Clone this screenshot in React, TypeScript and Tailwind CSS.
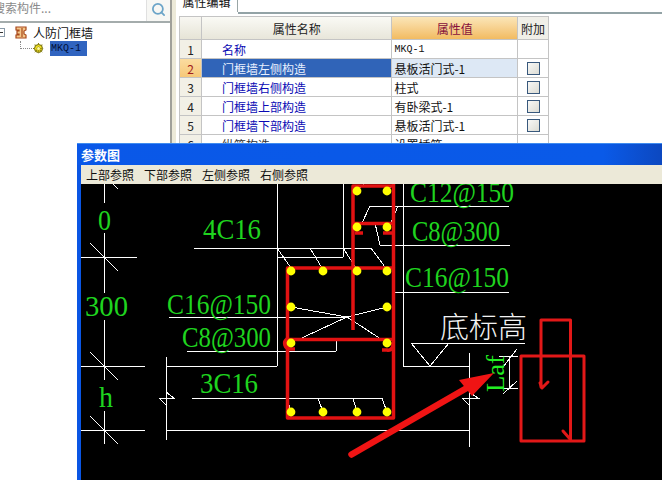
import React from "react";
import { Search } from "lucide-react";

const CJK = "font-['Noto_Sans_CJK_SC','Liberation_Sans',sans-serif]";
const MONO = "font-['Liberation_Mono','Noto_Sans_CJK_SC',monospace]";

type Row = { n: number; name: string; value: string; check: boolean; dark?: boolean };
const rows: Row[] = [
  { n: 1, name: "名称", value: "MKQ-1", check: false },
  { n: 2, name: "门框墙左侧构造", value: "悬板活门式-1", check: true },
  { n: 3, name: "门框墙右侧构造", value: "柱式", check: true },
  { n: 4, name: "门框墙上部构造", value: "有卧梁式-1", check: true },
  { n: 5, name: "门框墙下部构造", value: "悬板活门式-1", check: true },
  { n: 6, name: "纵筋构造", value: "设置插筋", check: false, dark: true },
];

const white: number[][] = [
  [104, 184, 104, 203], [104, 233, 104, 293], [104, 320, 104, 380], [104, 411, 104, 444],
  [81, 257, 137, 257], [105, 176, 118, 189], [90, 243, 118, 271],
  [81, 366, 145, 366], [90, 352, 118, 380], [81, 430, 145, 430], [90, 416, 118, 444],
  [166, 357, 166, 440], [166, 366, 277, 366], [166, 430, 469, 430],
  [277, 184, 277, 366], [343, 184, 343, 257], [277, 257, 343, 257],
  [194, 248, 371, 248], [277, 248, 291, 268], [310, 248, 322, 268], [343, 248, 356, 268], [371, 248, 385, 267],
  [169, 317, 347, 317], [291, 307, 347, 317], [347, 317, 387, 343], [387, 307, 347, 317], [347, 317, 291, 343],
  [187, 351, 336, 351], [336, 351, 336, 339],
  [192, 398, 382, 398], [287, 398, 291, 412], [318, 398, 323, 412], [353, 398, 357, 412], [382, 398, 387, 412],
  [364, 184, 357, 190], [394, 184, 387, 190],
  [370, 206, 509, 206], [370, 206, 362, 223], [398, 206, 391, 223],
  [380, 245, 510, 245], [375, 223, 380, 245],
  [403, 184, 403, 366], [403, 366, 469, 366], [393, 292, 509, 292],
  [411, 343, 525, 343], [411, 343, 430, 366], [430, 366, 449, 343],
  [469, 353, 469, 447],
  [499, 356, 518, 356], [499, 388, 518, 388], [509, 356, 509, 388], [503, 367, 517, 349], [503, 394, 517, 381],
];

const dots: number[][] = [
  [357, 191], [387, 191], [357, 227], [387, 227],
  [291, 271], [323, 271], [357, 271], [387, 271],
  [291, 307], [387, 307], [291, 343], [387, 343],
  [291, 412], [323, 412], [357, 412], [387, 412],
];

const labels: { t: string; x: number; y: number; w: number; s: number }[] = [
  { t: "0", x: 98, y: 230, w: 13, s: 30 },
  { t: "300", x: 85, y: 316, w: 43, s: 30 },
  { t: "h", x: 99, y: 407, w: 14, s: 29 },
  { t: "4C16", x: 203, y: 239, w: 58, s: 29 },
  { t: "C16@150", x: 167, y: 314, w: 104, s: 29 },
  { t: "C8@300", x: 182, y: 347, w: 89, s: 29 },
  { t: "3C16", x: 200, y: 393, w: 58, s: 29 },
  { t: "C12@150", x: 410, y: 202, w: 104, s: 29 },
  { t: "C8@300", x: 412, y: 241, w: 88, s: 29 },
  { t: "C16@150", x: 405, y: 287, w: 104, s: 29 },
];

function Diagram() {
  return (
    <svg viewBox="81 184 581 296" className="block h-full w-full bg-black">
      <g stroke="#ffffff" strokeWidth="1" fill="none" shapeRendering="crispEdges">
        {white.map((l, i) => (
          <line key={i} x1={l[0]} y1={l[1]} x2={l[2]} y2={l[3]} />
        ))}
        <polyline points="166,392 174,398 159,398 166,405" />
        <polyline points="469,392 478,398 462,398 469,405" />
      </g>
      <g stroke="#e21212" strokeWidth="3.5" fill="none" strokeLinejoin="round" strokeLinecap="butt">
        <rect x="287.5" y="268" width="106" height="150" />
        <polyline points="393.5,186 353,186 353,330" />
        <line x1="393.5" y1="184" x2="393.5" y2="268" />
        <line x1="353" y1="223.5" x2="393" y2="223.5" />
        <line x1="355" y1="233" x2="363" y2="233" />
        <line x1="383" y1="233" x2="392" y2="233" />
        <line x1="287" y1="339.5" x2="393" y2="339.5" />
        <path d="M287 339 a5.5 5.5 0 0 0 3 10 h5" />
        <path d="M382 350 h5 a5 5 0 0 0 5 -8" />
      </g>
      {dots.map((d, i) => (
        <circle key={i} cx={d[0]} cy={d[1]} r="4.4" fill="#ffff00" />
      ))}
      {labels.map((l, i) => (
        <text key={i} x={l.x} y={l.y} fontFamily="'Liberation Serif', serif" fontSize={l.s} fill="#1fd41f" textLength={l.w} lengthAdjust="spacingAndGlyphs">
          {l.t}
        </text>
      ))}
      <text x="440" y="338" fontFamily="'Noto Sans CJK SC', sans-serif" fontWeight="300" fontSize="29" fill="#f2f2f2" textLength="87">
        底标高
      </text>
      <text transform="translate(503.5 392) rotate(-90)" fontFamily="'Liberation Serif', serif" fontSize="25" fill="#22ee22" textLength="37" lengthAdjust="spacingAndGlyphs">
        Laf
      </text>
      <g stroke="#e21818" strokeWidth="3" fill="none" strokeLinejoin="round" strokeLinecap="round">
        <rect x="521" y="356" width="63" height="85" />
        <polyline points="541,387 541,320 570.5,320 570.5,440" />
        <polyline points="540,383 542,388 548,382" />
        <polyline points="563,431 570,439" />
      </g>
      <line x1="351.5" y1="454.5" x2="472" y2="385" stroke="#f01414" strokeWidth="6.5" strokeLinecap="round" />
      <polygon points="494,373 459,380 472,396" fill="#f01414" />
    </svg>
  );
}

function LeftPanel() {
  return (
    <div className={`flex h-full w-[170px] shrink-0 flex-col bg-white text-[12px] ${CJK}`}>
      <div className="flex h-[23px] shrink-0 border-b-[2px] border-[#a4acac]">
        <div className="-ml-[7px] flex-1 text-[12px] leading-[15px] text-[#8a8a8a]">搜索构件...</div>
        <div className="flex w-[24px] items-start justify-center border-l border-[#e0e0e0] bg-[#f7f7f4] pt-[2px]">
          <Search size={15} strokeWidth={2.8} color="#6ba4c8" />
        </div>
      </div>
      <div className="relative flex-1 pt-[1px]">
        <div className="flex h-[17px] items-center">
          <span className="-ml-[4px] flex h-[9px] w-[9px] items-center justify-center border border-[#8a9aa8] bg-white">
            <span className="h-px w-[5px] bg-[#333]" />
          </span>
          <svg width="12" height="13" viewBox="0 0 12 13" className="ml-[10px]">
            <path d="M1 1h10v3l-2 1v3l2 1v3H1V9h3V8H2V5h2V4H1z" fill="#f3c68a" stroke="#a8481c" strokeWidth="1.2" />
            <path d="M7 2v9" stroke="#a8481c" strokeWidth="1.2" />
          </svg>
          <span className="ml-[6px] leading-[17px] text-[#111]">人防门框墙</span>
        </div>
        <div className="flex h-[15px] items-center pl-[20px]">
          <span className="-mt-[8px] h-[8px] w-[12px] border-b border-l border-dotted border-[#8a8a8a]" />
          <svg width="11" height="11" viewBox="0 0 11 11" className="ml-px">
            <circle cx="5.5" cy="5.5" r="4" fill="#f0e020" stroke="#6a6410" strokeWidth="1" />
            <path d="M5.5 0v11M0 5.5h11M1.6 1.6l7.8 7.8M9.4 1.6l-7.8 7.8" stroke="#8a8010" strokeWidth="1.1" strokeDasharray="1.6 2" />
            <circle cx="5.5" cy="5.5" r="1.4" fill="#fff8a0" />
          </svg>
          <span className={`ml-[6px] h-[15px] w-[37px] bg-[#3064c0] pl-px text-[10px] leading-[15px] text-[#00103a] ${MONO}`}>MKQ-1</span>
        </div>
      </div>
    </div>
  );
}

function Cell({ className, children }: { className: string; children?: React.ReactNode }) {
  return <div className={`flex items-center border-r border-b border-[#c4c4c4] pt-px ${className}`}>{children}</div>;
}

function PropertyTable() {
  return (
    <div className={`ml-[3px] w-[370px] border-l border-t border-[#c4c4c4] text-[12px] ${CJK}`}>
      <div className="flex h-[23px]">
        <Cell className="w-[22px] bg-gradient-to-b from-[#f8f7f2] to-[#e6e4d6]" />
        <Cell className="w-[191px] justify-center bg-gradient-to-b from-[#fafaf5] to-[#e8e6da] text-[#222]">属性名称</Cell>
        <Cell className="w-[126px] justify-center bg-gradient-to-b from-[#fbe6b8] to-[#f2bb60] text-[#86103c]">属性值</Cell>
        <Cell className="w-[31px] justify-center bg-[#f0efe8] text-[#222]">附加</Cell>
      </div>
      {rows.map((r) => {
        const active = r.n === 2;
        return (
          <div key={r.n} className="flex h-[19px]">
            <Cell className={`w-[22px] justify-center ${active ? "bg-gradient-to-b from-[#fbdca0] to-[#f6c878] text-[#a02020]" : "bg-[#f2f0e6] text-[#222]"}`}>
              {r.n}
            </Cell>
            <Cell className={`w-[191px] pl-[20px] ${active ? "bg-[#3064b8] text-[#e8f0ff]" : r.dark ? "text-[#333]" : "text-[#0a0ab4]"}`}>
              {r.name}
            </Cell>
            <Cell className={`w-[126px] pl-[2px] text-[#111] ${active ? "bg-[#dde8f5]" : ""}`}>
              {r.n === 1 ? <span className={`text-[10px] ${MONO}`}>{r.value}</span> : r.value}
            </Cell>
            <Cell className="w-[31px] justify-center">
              {r.check && <span className="h-[13px] w-[13px] border border-[#38587c] bg-gradient-to-br from-[#f8f8f6] to-[#dcdcd4]" />}
            </Cell>
          </div>
        );
      })}
    </div>
  );
}

function ParamWindow() {
  const menus = ["上部参照", "下部参照", "左侧参照", "右侧参照"];
  return (
    <div className={`absolute bottom-0 left-[77px] right-0 top-[143px] flex flex-col bg-[#0a56e4] pl-[4px] ${CJK}`}>
      <div className="-ml-[4px] flex h-[22px] shrink-0 items-center border-t border-[#3f8cf0] bg-gradient-to-r from-[#0a58e8] via-[#0a5ae8] via-90% to-[#0c48c0] pl-[4px] text-[13px] font-bold text-white">
        参数图
      </div>
      <div className="flex h-[19px] shrink-0 items-center gap-[10.5px] bg-[#ece9d8] pl-[5px] text-[12px] text-[#111]">
        {menus.map((m) => (
          <span key={m} className="w-[47.5px] whitespace-nowrap">{m}</span>
        ))}
      </div>
      <div className="min-h-0 flex-1 bg-black">
        <Diagram />
      </div>
    </div>
  );
}

export default function App() {
  return (
    <div className="relative flex h-[480px] w-[662px] overflow-hidden bg-white">
      <LeftPanel />
      <div className="h-full w-[6px] shrink-0 border-l-[2px] border-[#a0a09a] bg-[#ece9d8]" />
      <div className="flex min-w-0 flex-1 flex-col">
        <div className="flex h-[16px] shrink-0 items-start border-b-[2px] border-white">
          <div className="flex h-[12px] w-[62px] items-end justify-center overflow-hidden border-r border-[#9aa6a6] bg-white">
            <span className={`mb-[3px] text-[12px] leading-[14px] text-[#111] ${CJK}`}>属性编辑</span>
          </div>
          <div className="h-[14px] flex-1 border-b-[2px] border-[#93a3a6]" />
        </div>
        <PropertyTable />
      </div>
      <ParamWindow />
    </div>
  );
}
